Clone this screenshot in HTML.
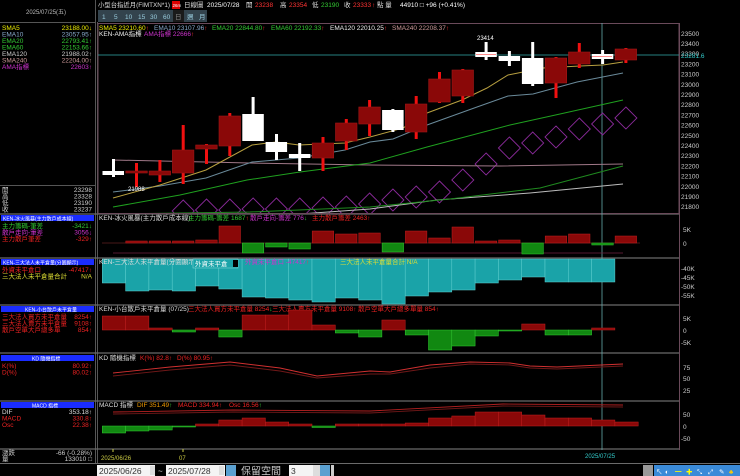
<!DOCTYPE html>
<html><head><meta charset="utf-8"><style>
html,body{margin:0;padding:0;background:#000;}
svg{display:block}
text{font-family:"Liberation Sans","Noto Sans CJK TC",sans-serif;font-size:6.5px;}
.cj{font-family:"Liberation Sans","Noto Sans CJK TC","WenQuanYi Zen Hei",sans-serif;}
</style></head><body>
<svg width="740" height="476" viewBox="0 0 740 476" xmlns="http://www.w3.org/2000/svg">
<defs><clipPath id="cc"><rect x="98" y="24" width="581" height="189"/></clipPath></defs>
<rect width="740" height="476" fill="#000"/>
<g stroke="#555" stroke-width="1" fill="none">
<line x1="95.5" y1="0" x2="95.5" y2="463"/>
<line x1="97.5" y1="22" x2="97.5" y2="463"/>
<line x1="0" y1="22.5" x2="95" y2="22.5"/>
<line x1="0" y1="185.5" x2="95" y2="185.5"/>
</g>
<g stroke="#6a6a6a" stroke-width="1.2">
<line x1="0" y1="214" x2="679" y2="214"/>
<line x1="0" y1="258" x2="679" y2="258"/>
<line x1="0" y1="305" x2="679" y2="305"/>
<line x1="0" y1="353" x2="679" y2="353"/>
<line x1="0" y1="401" x2="679" y2="401"/>
<line x1="0" y1="449" x2="679" y2="449"/>
</g>
<rect x="98" y="23.5" width="581" height="190" fill="none" stroke="#6a4a5a"/>
<line x1="679.5" y1="23" x2="679.5" y2="450" stroke="#6a4a5a"/>
<line x1="0" y1="463.5" x2="740" y2="463.5" stroke="#6a6a6a"/>

<!-- header -->
<g style="font-size:7px">
<text x="98" y="7" fill="#ddd" class="cj" textLength="72" lengthAdjust="spacingAndGlyphs">小型台指近月(FIMTXN*1)</text>
<rect x="172" y="1" width="8" height="8" fill="#d00"/><text x="172.5" y="7" fill="#fff" style="font-size:4.5px">26m</text>
<text x="184" y="7" fill="#ddd" class="cj">日線圖</text>
<text x="207" y="7" fill="#fff">2025/07/28</text>
<text x="246" y="7" fill="#ddd" class="cj">開</text><text x="255" y="7" fill="#f33">23238</text>
<text x="280" y="7" fill="#ddd" class="cj">高</text><text x="289" y="7" fill="#f33">23354</text>
<text x="312" y="7" fill="#ddd" class="cj">低</text><text x="321" y="7" fill="#3c3">23190</text>
<text x="344" y="7" fill="#ddd" class="cj">收</text><text x="353" y="7" fill="#f33">23333</text>
<text x="372" y="7" fill="#f33">↑</text><text x="377" y="7" fill="#ddd" class="cj">點 量</text>
<text x="400" y="7" fill="#fff">44910 □ +96 (+0.41%)</text>
</g>
<rect x="98" y="10" width="109" height="12" fill="#33434d"/>
<g fill="#9cd" style="font-size:7.5px">
<text x="102" y="19">1</text><text x="114" y="19">5</text><text x="125" y="19">10</text><text x="138" y="19">15</text><text x="150" y="19">30</text><text x="163" y="19">60</text></g>
<rect x="173" y="10" width="11" height="12" fill="#1a1a1a"/>
<text x="175" y="19" fill="#888" class="cj">日</text>
<text x="187" y="19" fill="#9cd" class="cj">週</text><text x="199" y="19" fill="#9cd" class="cj">月</text>
<text x="26" y="14" fill="#bbb" style="font-size:6px">2025/07/25(五)</text>

<!-- left panel -->
<g style="font-size:6px">
<text x="2" y="30" fill="#ee0">SMA5</text><text x="92" y="30" fill="#ee0" text-anchor="end">23188.00↓</text>
<text x="2" y="36.5" fill="#8ac">EMA10</text><text x="92" y="36.5" fill="#8ac" text-anchor="end">23057.95↑</text>
<text x="2" y="43" fill="#3c3">EMA20</text><text x="92" y="43" fill="#3c3" text-anchor="end">22793.41↑</text>
<text x="2" y="49.5" fill="#3c3">EMA60</text><text x="92" y="49.5" fill="#3c3" text-anchor="end">22153.66↑</text>
<text x="2" y="56" fill="#ccc">EMA120</text><text x="92" y="56" fill="#ccc" text-anchor="end">21988.02↑</text>
<text x="2" y="62.5" fill="#c99">SMA240</text><text x="92" y="62.5" fill="#c99" text-anchor="end">22204.00↑</text>
<text x="2" y="69" fill="#c3c" class="cj">AMA指標</text><text x="92" y="69" fill="#c3c" text-anchor="end">22603↑</text>
<text x="2" y="192" fill="#ccc" class="cj">開</text><text x="92" y="192" fill="#ccc" text-anchor="end">23298</text>
<text x="2" y="198.5" fill="#ccc" class="cj">高</text><text x="92" y="198.5" fill="#ccc" text-anchor="end">23328</text>
<text x="2" y="205" fill="#ccc" class="cj">低</text><text x="92" y="205" fill="#ccc" text-anchor="end">23190</text>
<text x="2" y="211.5" fill="#ccc" class="cj">收</text><text x="92" y="211.5" fill="#ccc" text-anchor="end">23237</text>

<rect x="1" y="215" width="93" height="6" fill="#1a2cff"/><text x="3" y="220.3" fill="#fff" class="cj" style="font-size:5px">KEN-冰火風暴(主力散戶成本線)</text>
<text x="2" y="228" fill="#3c3" class="cj">主力籌碼-筆差</text><text x="92" y="228" fill="#3c3" text-anchor="end">-3421↓</text>
<text x="2" y="234.5" fill="#c3c" class="cj">散戶走向-筆差</text><text x="92" y="234.5" fill="#c3c" text-anchor="end">3056↓</text>
<text x="2" y="241" fill="#e22" class="cj">主力散戶筆差</text><text x="92" y="241" fill="#e22" text-anchor="end">-329↑</text>

<rect x="1" y="259" width="93" height="6" fill="#1a2cff"/><text x="3" y="264.3" fill="#fff" class="cj" style="font-size:5px">KEN-三大法人未平倉量(分園顯示)</text>
<text x="2" y="272" fill="#e22" class="cj">外資未平倉口</text><text x="92" y="272" fill="#e22" text-anchor="end">-47417↑</text>
<text x="2" y="278.5" fill="#dd3" class="cj">三大法人未平倉量合計</text><text x="92" y="278.5" fill="#dd3" text-anchor="end">N/A</text>

<rect x="1" y="306" width="93" height="6" fill="#1a2cff"/><text x="25" y="311.3" fill="#fff" class="cj" style="font-size:5px">KEN-小台散戶未平倉量</text>
<text x="2" y="319" fill="#e22" class="cj">三大法人買方未平倉量</text><text x="92" y="319" fill="#e22" text-anchor="end">8254↑</text>
<text x="2" y="325.5" fill="#e22" class="cj">三大法人賣方未平倉量</text><text x="92" y="325.5" fill="#e22" text-anchor="end">9108↑</text>
<text x="2" y="332" fill="#e22" class="cj">散戶空單大戶總多單</text><text x="92" y="332" fill="#e22" text-anchor="end">854↑</text>

<rect x="1" y="355" width="93" height="6" fill="#1a2cff"/><text x="32" y="360.3" fill="#fff" class="cj" style="font-size:5px">KD 隨機指標</text>
<text x="2" y="368" fill="#e22">K(%)</text><text x="92" y="368" fill="#e22" text-anchor="end">80.92↑</text>
<text x="2" y="374.5" fill="#e22">D(%)</text><text x="92" y="374.5" fill="#e22" text-anchor="end">80.02↑</text>

<rect x="1" y="402" width="93" height="6" fill="#1a2cff"/><text x="32" y="407.3" fill="#fff" class="cj" style="font-size:5px">MACD 指標</text>
<text x="2" y="414" fill="#ddd">DIF</text><text x="92" y="414" fill="#ddd" text-anchor="end">353.18↑</text>
<text x="2" y="420.5" fill="#e22">MACD</text><text x="92" y="420.5" fill="#e22" text-anchor="end">330.8↑</text>
<text x="2" y="427" fill="#e22">Osc</text><text x="92" y="427" fill="#e22" text-anchor="end">22.38↑</text>
<text x="2" y="455" fill="#ccc" class="cj">漲跌</text><text x="92" y="455" fill="#ccc" text-anchor="end">-66 (-0.28%)</text>
<text x="2" y="461" fill="#ccc" class="cj">量</text><text x="92" y="461" fill="#ccc" text-anchor="end">133010 □</text>
</g>

<!-- main chart labels -->
<g style="font-size:6px">
<text x="99" y="30" fill="#ee0">SMA5 23210.60<tspan fill="#f33">↑</tspan></text>
<text x="154" y="30" fill="#8ac">EMA10 23107.96<tspan fill="#f33">↑</tspan></text>
<text x="212" y="30" fill="#3c3">EMA20 22844.80<tspan fill="#f33">↑</tspan></text>
<text x="271" y="30" fill="#3c3">EMA60 22192.33<tspan fill="#f33">↑</tspan></text>
<text x="330" y="30" fill="#eee">EMA120 22010.25<tspan fill="#f33">↑</tspan></text>
<text x="392" y="30" fill="#c99">SMA240 22208.37<tspan fill="#f33">↑</tspan></text>
<text x="99" y="36" fill="#eee" class="cj">KEN-AMA指標</text>
<text x="144" y="36" fill="#c3c" class="cj">AMA指標 22666<tspan fill="#f33">↑</tspan></text>
</g>
<g fill="#ccc" style="font-size:6.5px">
<text x="681" y="36">23500</text><text x="681" y="46">23400</text><text x="681" y="56">23300</text><text x="681" y="66.5">23200</text><text x="681" y="76.5">23100</text><text x="681" y="87">23000</text><text x="681" y="97">22900</text><text x="681" y="107">22800</text><text x="681" y="117.5">22700</text><text x="681" y="127.5">22600</text><text x="681" y="138">22500</text><text x="681" y="148">22400</text><text x="681" y="158">22300</text><text x="681" y="168.5">22200</text><text x="681" y="178.5">22100</text><text x="681" y="189">22000</text><text x="681" y="199">21900</text><text x="681" y="209">21800</text>
</g>
<text x="681" y="58" fill="#3cc" style="font-size:6.5px">23281.6</text>
<line x1="98" y1="55" x2="679" y2="55" stroke="#3aa" stroke-width="0.8"/>
<line x1="602" y1="23" x2="602" y2="450" stroke="#6aa" stroke-width="0.8"/>

<g clip-path="url(#cc)">
<g fill="none" stroke="#8a2a9a" stroke-width="0.9">
<polygon points="183.2,200 194.2,211 183.2,222 172.2,211"/>
<polygon points="206.5,199 217.5,210 206.5,221 195.5,210"/>
<polygon points="229.8,199 240.8,210 229.8,221 218.8,210"/>
<polygon points="253.1,198 264.1,209 253.1,220 242.1,209"/>
<polygon points="276.4,198 287.4,209 276.4,220 265.4,209"/>
<polygon points="299.7,198 310.7,209 299.7,220 288.7,209"/>
<polygon points="323,197 334,208 323,219 312,208"/>
<polygon points="346.3,196 357.3,207 346.3,218 335.3,207"/>
<polygon points="369.6,193 380.6,204 369.6,215 358.6,204"/>
<polygon points="392.9,189 403.9,200 392.9,211 381.9,200"/>
<polygon points="416.2,186 427.2,197 416.2,208 405.2,197"/>
<polygon points="439.5,181 450.5,192 439.5,203 428.5,192"/>
<polygon points="462.8,169 473.8,180 462.8,191 451.8,180"/>
<polygon points="486.1,153 497.1,164 486.1,175 475.1,164"/>
<polygon points="509.4,137 520.4,148 509.4,159 498.4,148"/>
<polygon points="532.7,132 543.7,143 532.7,154 521.7,143"/>
<polygon points="556,126 567,137 556,148 545,137"/>
<polygon points="579.3,118 590.3,129 579.3,140 568.3,129"/>
<polygon points="602.6,113 613.6,124 602.6,135 591.6,124"/>
<polygon points="625.9,107 636.9,118 625.9,129 614.9,118"/>
</g>
<g fill="none" stroke-width="1">
<polyline stroke="#a07888" points="113,160 250,163 370,165 500,166 623,164"/>
<polyline stroke="#bbb" points="300,214 370,209 437,200 530,193 623,184"/>
<polyline stroke="#1f8a1f" points="113,214 250,212 370,207 450,199 540,188 623,166"/>
<polyline stroke="#1fa01f" points="113,207 180,195 247,180 300,172 370,163 427,147 510,125 560,114 623,100"/>
<polyline stroke="#6a8a9a" points="113,192 160,186 206,178 252,162 299,158 345,150 370,142 393,139 427,125 477,107 508,96 533,94 577,82 623,73"/>
<polyline stroke="#b8a040" points="113,198 160,185 206,170 252,145 276,142 299,145 345,143 370,137 403,128 427,113 462,100 487,88 508,75 543,68 580,66 603,65 623,62"/>
</g>
</g>
<g>
<g fill="#fff">
<rect x="112" y="159" width="3" height="18"/><rect x="102.5" y="171" width="21.5" height="4"/>
<rect x="251.6" y="97" width="3" height="44"/><rect x="242.3" y="114" width="21.5" height="27"/>
<rect x="275" y="134" width="3" height="26"/><rect x="265.6" y="142" width="21.5" height="10"/>
<rect x="298.2" y="143" width="3" height="28"/><rect x="288.9" y="154" width="21.5" height="4"/>
<rect x="391.4" y="109" width="3" height="23"/><rect x="382.1" y="110" width="21.5" height="20"/>
<rect x="484.6" y="42" width="3" height="18"/><rect x="475.3" y="52" width="21.5" height="5"/>
<rect x="507.9" y="51" width="3" height="15"/><rect x="498.6" y="56" width="21.5" height="5"/>
<rect x="531.2" y="42" width="3" height="44"/><rect x="521.9" y="58" width="21.5" height="26"/>
<rect x="601.1" y="50" width="3" height="14"/><rect x="591.8" y="54" width="21.5" height="5"/>
</g>
<g fill="#f01010">
<rect x="135" y="163" width="3" height="24"/><rect x="158.4" y="160" width="3" height="22"/><rect x="181.7" y="125" width="3" height="59"/><rect x="205" y="144" width="3" height="20"/><rect x="228.3" y="113" width="3" height="43"/><rect x="321.5" y="137" width="3" height="34"/><rect x="344.8" y="119" width="3" height="31"/><rect x="368.1" y="100" width="3" height="36"/><rect x="414.7" y="96" width="3" height="43"/><rect x="438" y="72" width="3" height="31"/><rect x="461.3" y="69" width="3" height="34"/><rect x="554.5" y="57" width="3" height="41"/><rect x="577.8" y="43" width="3" height="25"/><rect x="624.4" y="48" width="3" height="15"/>
</g>
<g fill="#8a0808" stroke="#a01818" stroke-width="0.6">
<rect x="125.8" y="171" width="21.5" height="2"/><rect x="149.1" y="171" width="21.5" height="4"/><rect x="172.4" y="150" width="21.5" height="23"/><rect x="195.7" y="145" width="21.5" height="4"/><rect x="219" y="116" width="21.5" height="30"/><rect x="312.2" y="143" width="21.5" height="15"/><rect x="335.5" y="123" width="21.5" height="18"/><rect x="358.8" y="107" width="21.5" height="17"/><rect x="405.4" y="104" width="21.5" height="28"/><rect x="428.7" y="79" width="21.5" height="23"/><rect x="452" y="70" width="21.5" height="26"/><rect x="545.2" y="58" width="21.5" height="25"/><rect x="568.5" y="52" width="21.5" height="12"/><rect x="615.1" y="49" width="21.5" height="11"/>
</g>
<g stroke="#f66" stroke-width="0.8"><line x1="476" y1="54.5" x2="496" y2="54.5"/><line x1="592" y1="56.5" x2="612" y2="56.5"/></g>
</g>
<text x="128" y="191" fill="#fff" style="font-size:6px">21988</text>
<text x="477" y="40" fill="#fff" style="font-size:6px">23414</text>

<!-- panel 2 -->
<g style="font-size:5.8px" class="cj">
<text x="99" y="220" fill="#ddd">KEN-冰火風暴(主力散戶成本線)</text>
<text x="188" y="220" fill="#3c3">主力籌碼-籌差 1687<tspan fill="#f33">↑</tspan></text>
<text x="250" y="220" fill="#c3c">散戶走向-籌差 776<tspan fill="#3c3">↓</tspan></text>
<text x="312" y="220" fill="#e22">主力散戶籌差 2463↑</text>
</g>
<line x1="102" y1="243" x2="640" y2="243" stroke="#602020" stroke-width="0.8"/>
<line x1="113" y1="253" x2="623" y2="253" stroke="#702040" stroke-width="0.8"/>
<g fill="#8a0808" stroke="#c02020" stroke-width="0.5">
<rect x="125.8" y="241" width="21.5" height="2"/><rect x="149.1" y="241" width="21.5" height="2"/><rect x="172.4" y="241" width="21.5" height="2"/><rect x="195.7" y="240" width="21.5" height="3"/><rect x="219" y="226" width="21.5" height="17"/><rect x="312.2" y="231" width="21.5" height="12"/><rect x="335.5" y="234" width="21.5" height="9"/><rect x="358.8" y="233" width="21.5" height="10"/><rect x="405.4" y="231" width="21.5" height="12"/><rect x="428.7" y="238" width="21.5" height="5"/><rect x="452" y="227" width="21.5" height="16"/><rect x="475.3" y="241" width="21.5" height="2"/><rect x="498.6" y="240" width="21.5" height="3"/><rect x="545.2" y="236" width="21.5" height="7"/><rect x="568.5" y="234" width="21.5" height="9"/><rect x="615.1" y="236" width="21.5" height="7"/>
</g>
<g fill="#118811" stroke="#33cc33" stroke-width="0.5">
<rect x="242.3" y="243" width="21.5" height="10"/><rect x="265.6" y="243" width="21.5" height="4"/><rect x="288.9" y="243" width="21.5" height="6"/><rect x="382.1" y="243" width="21.5" height="9"/><rect x="521.9" y="243" width="21.5" height="11"/><rect x="591.8" y="243" width="21.5" height="2"/>
</g>
<g fill="#ccc" style="font-size:6.5px"><text x="683" y="232">5K</text><text x="683" y="246">0</text></g>

<!-- panel 3 -->
<g fill="#1aa3a8" stroke="#60d0d0" stroke-width="0.5">
<rect x="102.3" y="259" width="23.3" height="24"/><rect x="125.6" y="259" width="23.3" height="32"/><rect x="148.9" y="259" width="23.3" height="31"/><rect x="172.2" y="259" width="23.3" height="32"/><rect x="195.5" y="259" width="23.3" height="27"/><rect x="218.8" y="259" width="23.3" height="30"/><rect x="242.1" y="259" width="23.3" height="38"/><rect x="265.4" y="259" width="23.3" height="39"/><rect x="288.7" y="259" width="23.3" height="41"/><rect x="312" y="259" width="23.3" height="43"/><rect x="335.3" y="259" width="23.3" height="39"/><rect x="358.6" y="259" width="23.3" height="41"/><rect x="381.9" y="259" width="23.3" height="45"/><rect x="405.2" y="259" width="23.3" height="37"/><rect x="428.5" y="259" width="23.3" height="33"/><rect x="451.8" y="259" width="23.3" height="31"/><rect x="475.1" y="259" width="23.3" height="24"/><rect x="498.4" y="259" width="23.3" height="21"/><rect x="521.7" y="259" width="23.3" height="18"/><rect x="545" y="259" width="23.3" height="23"/><rect x="568.3" y="259" width="23.3" height="23"/><rect x="591.6" y="259" width="23.3" height="23"/>
</g>
<g style="font-size:5.8px" class="cj">
<text x="99" y="264" fill="#ddd">KEN-三大法人未平倉量(分園顯示)</text>
<rect x="193" y="259" width="45" height="9" fill="#1aa3a8" stroke="#8dd" stroke-width="0.5"/>
<text x="195" y="266" fill="#fff">外資未平倉</text><rect x="233" y="260" width="5" height="7" fill="#000"/>
<text x="245" y="264" fill="#c3c">外資未平倉口 -47417<tspan fill="#f33">↑</tspan></text>
<text x="340" y="264" fill="#dd3">三大法人未平倉量合計 N/A</text>
</g>
<g fill="#ccc" style="font-size:6.5px"><text x="681" y="271">-40K</text><text x="681" y="280">-45K</text><text x="681" y="289">-50K</text><text x="681" y="298">-55K</text></g>

<!-- panel 4 -->
<g style="font-size:5.8px" class="cj">
<text x="99" y="311" fill="#ddd">KEN-小台散戶未平倉量 (07/25)</text>
<text x="188" y="311" fill="#e22">三大法人買方未平倉量 8254<tspan fill="#3c3">↓</tspan></text>
<text x="272" y="311" fill="#e22">三大法人賣方未平倉量 9108↑</text>
<text x="358" y="311" fill="#e22">散戶空單大戶總多單量 854↑</text>
</g>
<g fill="#8a0808" stroke="#c02020" stroke-width="0.5">
<rect x="102.3" y="316" width="23.3" height="14"/><rect x="125.6" y="316" width="23.3" height="14"/><rect x="148.9" y="328" width="23.3" height="2"/><rect x="195.5" y="328" width="23.3" height="2"/><rect x="242.1" y="315" width="23.3" height="15"/><rect x="265.4" y="315" width="23.3" height="15"/><rect x="288.7" y="310" width="23.3" height="20"/><rect x="312" y="325" width="23.3" height="5"/><rect x="381.9" y="320" width="23.3" height="10"/><rect x="521.7" y="324" width="23.3" height="6"/><rect x="591.6" y="328" width="23.3" height="2"/>
</g>
<g fill="#118811" stroke="#33cc33" stroke-width="0.5">
<rect x="172.2" y="330" width="23.3" height="2"/><rect x="218.8" y="330" width="23.3" height="7"/><rect x="335.3" y="330" width="23.3" height="3"/><rect x="358.6" y="330" width="23.3" height="7"/><rect x="405.2" y="330" width="23.3" height="5"/><rect x="428.5" y="330" width="23.3" height="20"/><rect x="451.8" y="330" width="23.3" height="16"/><rect x="475.1" y="330" width="23.3" height="6"/><rect x="498.4" y="330" width="23.3" height="1"/><rect x="545" y="330" width="23.3" height="5"/><rect x="568.3" y="330" width="23.3" height="5"/>
</g>
<g fill="#ccc" style="font-size:6.5px"><text x="683" y="321">5K</text><text x="683" y="333">0</text><text x="681" y="345">-5K</text></g>

<!-- KD -->
<g style="font-size:5.8px" class="cj">
<text x="99" y="360" fill="#ddd">KD 隨機指標</text>
<text x="140" y="360" fill="#e22">K(%) 82.8↑</text><text x="177" y="360" fill="#e22">D(%) 80.95↑</text>
</g>
<g fill="none" stroke-width="0.9">
<polyline stroke="#701818" points="113,376 170,370 230,365 280,371 317,378 370,374 390,374 430,368 470,364 510,365 530,368 557,369 623,366"/>
<polyline stroke="#d03030" points="113,373 170,367 230,362 280,368 317,376 370,371 390,372 430,365 470,362 510,363 530,366 557,367 623,364"/>
</g>
<g fill="#ccc" style="font-size:6.5px"><text x="683" y="370">75</text><text x="683" y="381">50</text><text x="683" y="393">25</text></g>

<!-- MACD -->
<g style="font-size:5.8px">
<text x="99" y="407" fill="#ddd" class="cj">MACD 指標</text>
<text x="137" y="407" fill="#e90">DIF 351.49<tspan fill="#3c3">↑</tspan></text>
<text x="178" y="407" fill="#e22">MACD 334.94↑</text>
<text x="229" y="407" fill="#e22">Osc 16.56<tspan fill="#3c3">↑</tspan></text>
</g>
<g fill="none" stroke-width="0.9">
<polyline stroke="#701818" points="113,414 233,412 370,413 503,406 623,407"/>
<polyline stroke="#b02020" points="113,412 233,410 370,411 503,404 623,405"/>
</g>
<g fill="#8a0808" stroke="#c02020" stroke-width="0.5">
<rect x="195.5" y="424" width="23.3" height="2"/><rect x="218.8" y="420" width="23.3" height="6"/><rect x="242.1" y="418" width="23.3" height="8"/><rect x="265.4" y="422" width="23.3" height="4"/><rect x="288.7" y="424" width="23.3" height="2"/><rect x="335.3" y="424" width="23.3" height="2"/><rect x="358.6" y="424" width="23.3" height="2"/><rect x="381.9" y="424" width="23.3" height="2"/><rect x="405.2" y="423" width="23.3" height="3"/><rect x="428.5" y="418" width="23.3" height="8"/><rect x="451.8" y="416" width="23.3" height="10"/><rect x="475.1" y="412" width="23.3" height="14"/><rect x="498.4" y="412" width="23.3" height="14"/><rect x="521.7" y="415" width="23.3" height="11"/><rect x="545" y="418" width="23.3" height="8"/><rect x="568.3" y="418" width="23.3" height="8"/><rect x="591.6" y="420" width="23.3" height="6"/><rect x="614.9" y="422" width="23.3" height="4"/>
</g>
<g fill="#118811" stroke="#33cc33" stroke-width="0.5">
<rect x="102.3" y="426" width="23.3" height="7"/><rect x="125.6" y="426" width="23.3" height="5"/><rect x="148.9" y="426" width="23.3" height="4"/><rect x="172.2" y="426" width="23.3" height="1"/><rect x="312" y="426" width="23.3" height="1.5"/>
</g>
<g fill="#ccc" style="font-size:6.5px"><text x="683" y="417">50</text><text x="683" y="429">0</text><text x="681" y="441">-50</text></g>

<!-- dates -->
<line x1="113" y1="449" x2="113" y2="452" stroke="#cc4"/><line x1="183" y1="449" x2="183" y2="452" stroke="#cc4"/>
<text x="101" y="460" fill="#cc4" style="font-size:6px">2025/06/26</text>
<text x="179" y="460" fill="#cc4" style="font-size:6px">07</text>
<text x="585" y="458" fill="#3cc" style="font-size:6px">2025/07/25</text>

<!-- bottom toolbar -->
<rect x="97" y="465" width="58" height="11" fill="#f4f4f4"/>
<text x="99" y="474" fill="#333" style="font-size:8.5px">2025/06/26</text>
<rect x="150" y="466" width="5" height="9" fill="#ddd"/>
<text x="158" y="474" fill="#ccc" style="font-size:8px">~</text>
<rect x="166" y="465" width="59" height="11" fill="#f4f4f4"/>
<text x="168" y="474" fill="#333" style="font-size:8.5px">2025/07/28</text>
<rect x="219" y="466" width="5" height="9" fill="#ddd"/>
<rect x="226" y="465" width="10" height="11" fill="#5aa0d0"/>
<text x="241" y="474.5" fill="#ccc" class="cj" style="font-size:10px">保留空間</text>
<rect x="289" y="465" width="30" height="11" fill="#f4f4f4"/>
<text x="291" y="474" fill="#333" style="font-size:8.5px">3</text>
<rect x="313" y="465" width="7" height="11" fill="#ddd"/>
<rect x="320" y="465" width="10" height="11" fill="#5aa0d0"/>
<rect x="331" y="465" width="3" height="11" fill="#ccc"/>
<rect x="643" y="465" width="10" height="11" fill="#999"/>
<rect x="654" y="465" width="86" height="11" fill="#3a8ad8"/>
<g fill="#fff" style="font-size:8px"><text x="656" y="474">↖</text><text x="665" y="474">◐</text><text x="675" y="474" fill="#ff0">━</text><text x="686" y="474" fill="#ff0">✚</text><text x="697" y="474">⤡</text><text x="708" y="474">⤢</text><text x="719" y="474">✎</text><text x="729" y="474" fill="#fc0">♣</text></g>
</svg>
</body></html>
